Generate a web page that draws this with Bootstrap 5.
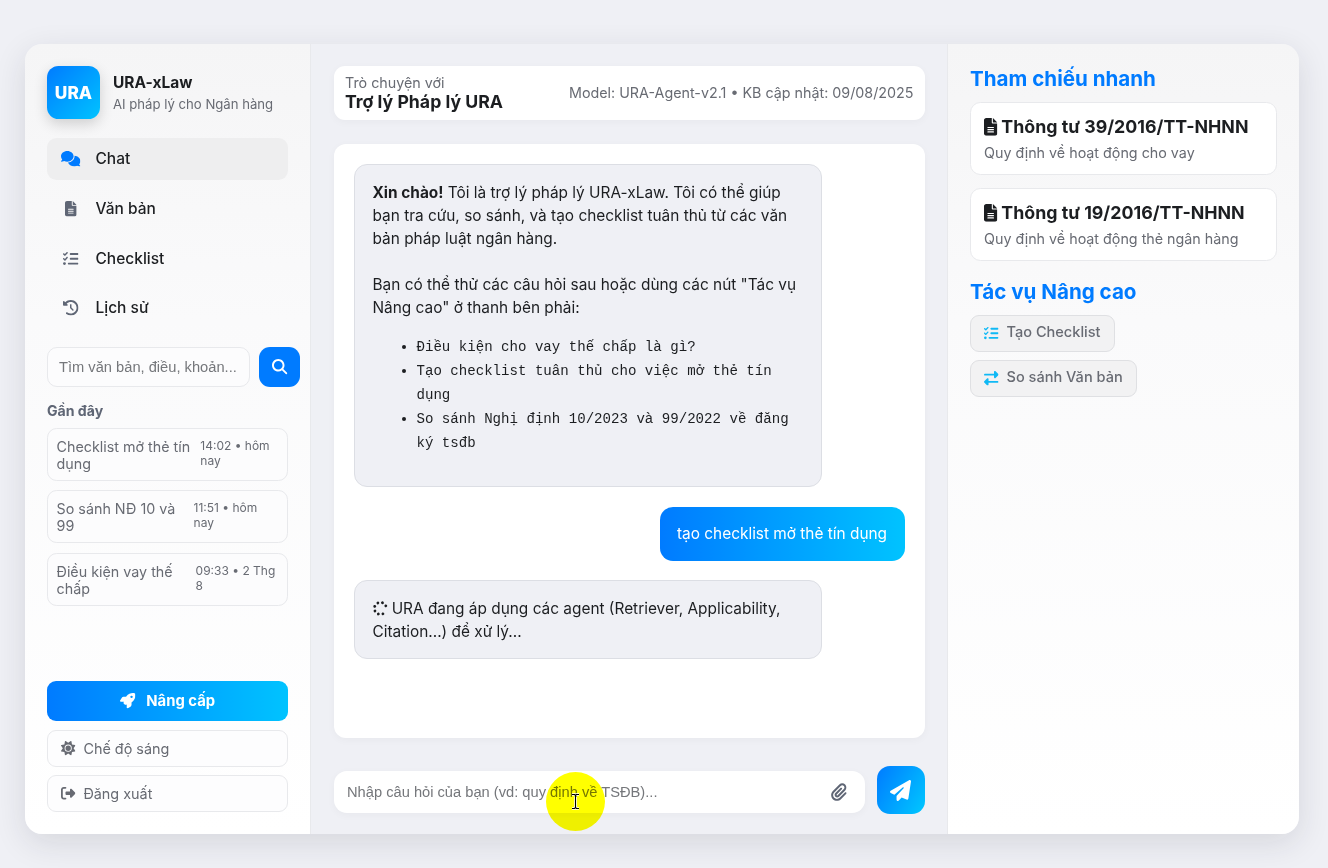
<!DOCTYPE html>
<html lang="vi">
<head>
<meta charset="utf-8">
<meta name="viewport" content="width=device-width, initial-scale=1">
<title>URA-xLaw</title>
<link rel="stylesheet" href="https://cdn.jsdelivr.net/npm/bootstrap@5.3.0/dist/css/bootstrap.min.css">
<style>
:root{--ink:#1c1e21;--muted-ink:#686b73;--brand:#007bff;--grad:linear-gradient(90deg,#007bff,#00c3ff);--line:#e8e9ec}
body{font-family:Inter,"Liberation Sans",sans-serif;font-size:15.4px;line-height:1.5;color:var(--ink);background:#eff0f5;height:868px;overflow:hidden}
svg.ic{fill:currentColor;height:1em;display:inline-block;overflow:visible;flex:none}
.shell{margin:44px 0 0 25px;width:1274px;height:790px;border-radius:17px;background:#eff0f5;box-shadow:0 9px 32px rgba(30,34,50,.12);overflow:hidden}
.side{width:286px;padding:22px;background:linear-gradient(#f5f5f6,#fafafb 35%,#fff);border-right:1px solid var(--line)}
.logo{width:53px;height:53px;border-radius:11.5px;background:linear-gradient(135deg,#007bff,#00c3ff);color:#fff;font-weight:800;font-size:17.3px;box-shadow:0 5px 14px rgba(0,0,0,.16)}
.brand-name{font-size:15.5px;font-weight:700;line-height:23px}
.brand-sub{font-size:13.15px;line-height:20px;color:var(--muted-ink)}
.menu-item{height:42px;margin-bottom:7.7px;padding-left:13px;border-radius:9.6px;font-size:15.5px;font-weight:500;color:var(--ink)}
.menu-item .slot{width:21px;margin-right:14.5px;color:#5f6675}
.menu-item.on{background:#eeeeef}
.menu-item.on .slot{color:var(--brand)}
.find{width:203px;height:40px;border:1px solid var(--line);border-radius:10px;padding:0 11px;background:#fcfcfd;font-family:"Liberation Sans",sans-serif;font-size:14.68px;color:#75777b}
.find-btn{width:41px;height:40px;border-radius:11px;background:var(--brand);color:#fff;font-size:15.4px}
.recent-h{font-size:14.1px;font-weight:700;line-height:20px;color:#5f6675}
.recent{border:1px solid var(--line);border-radius:9.6px;padding:9px 9px 0 8.6px;height:53px;margin-bottom:9.3px;background:#fcfcfd;color:var(--muted-ink);font-size:14.3px;line-height:17px}
.recent .when{font-size:12px;line-height:15px}
.up{height:40px;border-radius:9px;background:var(--grad);color:#fff;font-weight:700;font-size:14.8px}
.ghost{height:37px;border:1px solid var(--line);border-radius:9px;background:#fdfdfe;color:var(--muted-ink);font-size:14.4px;padding-left:13px}
.main-col{width:636px;padding:22px 22.5px 20px 23px}
.head-bar{height:54px;border-radius:11px;background:#fff;padding:0 11px;box-shadow:0 2px 8px rgba(0,0,0,.035)}
.lead-in{font-size:14.3px;line-height:16px;color:var(--muted-ink)}
.title{font-size:17.7px;font-weight:700;line-height:21px}
.model{font-size:14.3px;color:var(--muted-ink)}
.thread{height:594px;margin-top:24px;border-radius:12px;background:#fff;padding:20px;box-shadow:0 2px 8px rgba(0,0,0,.035)}
.bubble{width:468px;border:1px solid #dcdee4;border-radius:13px;background:#eff0f5;padding:16px 17.5px;line-height:23px;margin-bottom:20px}
.tips{font-family:"Liberation Mono",monospace;font-size:14.1px;line-height:24px;padding-left:44px;margin:16px 0 0}
.mine{height:54px;width:245px;border-radius:13px;background:var(--grad);color:#fff;margin-bottom:19px}
.composer{height:48px;margin-top:28px}
.ask{height:42px;width:531px;margin-top:4px;border-radius:13px;background:#fff;padding:0 18px 0 13px;font-family:"Liberation Sans",sans-serif;font-size:14.68px;color:#75777b;box-shadow:0 2px 8px rgba(0,0,0,.035)}
.send{width:48px;height:48px;border-radius:13px;background:linear-gradient(120deg,#007bff,#00c8ff);color:#fff;font-size:21px}
.right-col{width:352px;padding:22px 22px;background:linear-gradient(#f5f5f6,#fafafb 35%,#fff);border-left:1px solid var(--line)}
.sec{font-size:20.6px;font-weight:700;line-height:26px;color:var(--brand);margin:0}
.ref{height:73px;border:1px solid var(--line);border-radius:10.5px;background:#fff;padding:11px 13px;margin-bottom:13px}
.ref-t{font-size:17.8px;font-weight:700;line-height:26px}
.ref-s{font-size:14.3px;line-height:22px;color:var(--muted-ink);margin-top:2px}
.act{height:36.5px;border:1px solid #dfe0e3;border-radius:9px;background:#f2f2f3;padding:0 13px;font-size:14.55px;font-weight:500;color:var(--muted-ink);margin-bottom:8.5px}
.act svg{color:#10b9f5}
.halo{position:absolute;left:546px;top:772px;width:59px;height:59px;border-radius:50%;background:#ff0;mix-blend-mode:multiply}
.caret{position:absolute;left:571px;top:793px}
</style>
</head>
<body class="position-relative">
<svg width="0" height="0" class="position-absolute">
<defs>
<symbol id="chat" viewBox="0 0 640 512"><path d="M208 352c114.900 0 208-78.800 208-176S322.900 0 208 0S0 78.800 0 176c0 38.600 14.700 74.300 39.600 103.400c-3.500 9.400-8.700 17.700-14.200 24.700c-4.800 6.200-9.700 11-13.300 14.300c-1.800 1.600-3.300 2.900-4.300 3.700c-.5 .4-.9 .7-1.100 .8l-.2 .2C1 327.200-1.400 334.400 .8 340.900S9.100 352 16 352c21.800 0 43.800-5.600 62.100-12.500c9.200-3.500 17.800-7.400 25.200-11.400C134.100 343.300 169.800 352 208 352zM448 176c0 112.300-99.100 196.900-216.500 207C255.800 457.400 336.400 512 432 512c38.200 0 73.900-8.700 104.700-23.900c7.500 4 16 7.900 25.200 11.400c18.300 6.900 40.300 12.500 62.100 12.500c6.900 0 13.100-4.500 15.200-11.100c2.100-6.600-.2-13.800-5.800-17.900l-.2-.2c-.2-.2-.6-.4-1.100-.8c-1-.8-2.500-2-4.300-3.700c-3.600-3.300-8.500-8.100-13.300-14.300c-5.500-7-10.700-15.400-14.200-24.700c24.900-29 39.600-64.700 39.600-103.400c0-92.800-84.900-168.900-192.600-175.500c.4 5.100 .6 10.300 .6 15.500z"/></symbol>
<symbol id="file" viewBox="0 0 384 512"><path d="M64 0C28.700 0 0 28.700 0 64V448c0 35.300 28.700 64 64 64H320c35.300 0 64-28.700 64-64V160H256c-17.700 0-32-14.300-32-32V0H64zM256 0V128H384L256 0zM112 256H272c8.800 0 16 7.200 16 16s-7.200 16-16 16H112c-8.800 0-16-7.200-16-16s7.200-16 16-16zm0 64H272c8.800 0 16 7.200 16 16s-7.200 16-16 16H112c-8.800 0-16-7.200-16-16s7.200-16 16-16zm0 64H272c8.800 0 16 7.200 16 16s-7.200 16-16 16H112c-8.800 0-16-7.200-16-16s7.200-16 16-16z"/></symbol>
<symbol id="list" viewBox="0 0 512 512"><path d="M152.100 38.200c9.900 8.900 10.700 24 1.800 33.900l-72 80c-4.400 4.900-10.600 7.800-17.200 7.900s-12.900-2.400-17.600-7L7 113C-2.300 103.600-2.300 88.400 7 79s24.600-9.400 33.900 0l22.100 22.100 55.100-61.200c8.900-9.900 24-10.700 33.900-1.800zm0 160c9.900 8.900 10.700 24 1.800 33.900l-72 80c-4.400 4.900-10.600 7.800-17.200 7.900s-12.900-2.400-17.600-7L7 273c-9.400-9.400-9.400-24.600 0-33.900s24.600-9.400 33.900 0l22.100 22.100 55.100-61.200c8.900-9.900 24-10.700 33.900-1.800zM224 96c0-17.700 14.300-32 32-32H480c17.700 0 32 14.300 32 32s-14.300 32-32 32H256c-17.700 0-32-14.300-32-32zm0 160c0-17.700 14.300-32 32-32H480c17.700 0 32 14.300 32 32s-14.300 32-32 32H256c-17.700 0-32-14.300-32-32zM160 416c0-17.700 14.300-32 32-32H480c17.700 0 32 14.300 32 32s-14.300 32-32 32H192c-17.700 0-32-14.300-32-32zM48 368a48 48 0 1 1 0 96 48 48 0 1 1 0-96z"/></symbol>
<symbol id="hist" viewBox="0 0 512 512"><path d="M75 75L41 41C25.900 25.900 0 36.600 0 57.900V168c0 13.300 10.700 24 24 24H134.100c21.400 0 32.100-25.900 17-41l-30.800-30.800C155 85.500 203 64 256 64c106 0 192 86 192 192s-86 192-192 192c-40.800 0-78.600-12.700-109.700-34.400c-14.500-10.100-34.400-6.600-44.600 7.900s-6.600 34.400 7.900 44.600C151.200 495 201.700 512 256 512c141.400 0 256-114.600 256-256S397.400 0 256 0C185.300 0 121.300 28.700 75 75zm181 53c-13.300 0-24 10.700-24 24V256c0 6.400 2.500 12.500 7 17l72 72c9.400 9.400 24.600 9.400 33.900 0s9.400-24.600 0-33.900l-65-65V152c0-13.300-10.700-24-24-24z"/></symbol>
<symbol id="glass" viewBox="0 0 512 512"><path d="M416 208c0 45.900-14.900 88.300-40 122.700L502.600 457.400c12.500 12.500 12.500 32.800 0 45.300s-32.800 12.500-45.300 0L330.700 376c-34.400 25.200-76.800 40-122.700 40C93.100 416 0 322.900 0 208S93.100 0 208 0S416 93.100 416 208zM208 352a144 144 0 1 0 0-288 144 144 0 1 0 0 288z"/></symbol>
<symbol id="rocket" viewBox="0 0 512 512"><path d="M156.600 384.900L125.700 354c-8.500-8.500-11.500-20.800-7.700-32.200c3-8.900 7-20.500 11.800-33.800L24 288c-8.600 0-16.600-4.600-20.900-12.100s-4.200-16.700 .2-24.100l52.500-88.500c13-21.900 36.500-35.300 61.900-35.300l82.300 0c2.400-4 4.800-7.700 7.200-11.300C289.100-4.100 411.100-8.100 483.900 5.300c11.600 2.100 20.600 11.200 22.800 22.800c13.400 72.900 9.300 194.800-111.400 276.700c-3.500 2.400-7.300 4.800-11.300 7.200v82.300c0 25.400-13.400 49-35.300 61.900l-88.500 52.500c-7.400 4.400-16.600 4.500-24.100 .2s-12.100-12.200-12.100-20.900V380.800c-14.100 4.900-26.400 8.900-35.700 11.900c-11.200 3.600-23.400 .5-31.800-7.800zM384 168a40 40 0 1 0 0-80 40 40 0 1 0 0 80z"/></symbol>
<symbol id="sun" viewBox="0 0 512 512"><path d="M361.500 1.200c5 2.100 8.600 6.600 9.600 11.900L391 121l107.900 19.800c5.300 1 9.800 4.600 11.900 9.600s1.500 10.700-1.600 15.200L446.900 256l62.300 90.300c3.100 4.500 3.700 10.200 1.600 15.200s-6.600 8.600-11.900 9.600L391 391 371.100 498.900c-1 5.300-4.600 9.800-9.600 11.900s-10.700 1.500-15.200-1.600L256 446.900l-90.300 62.300c-4.500 3.100-10.200 3.700-15.200 1.600s-8.600-6.600-9.600-11.900L121 391 13.100 371.100c-5.300-1-9.800-4.600-11.900-9.600s-1.500-10.700 1.600-15.200L65.100 256 2.800 165.700c-3.100-4.500-3.700-10.200-1.600-15.200s6.600-8.600 11.900-9.600L121 121 140.900 13.100c1-5.300 4.600-9.800 9.600-11.900s10.700-1.500 15.200 1.600L256 65.100 346.300 2.800c4.500-3.100 10.200-3.700 15.200-1.600zM160 256a96 96 0 1 1 192 0 96 96 0 1 1 -192 0zm224 0a128 128 0 1 0 -256 0 128 128 0 1 0 256 0z"/></symbol>
<symbol id="exit" viewBox="0 0 512 512"><path d="M377.900 105.900L500.700 228.700c7.200 7.200 11.300 17.100 11.300 27.300s-4.100 20.100-11.300 27.300L377.900 406.100c-6.400 6.400-15 9.900-24 9.900c-18.700 0-33.900-15.200-33.900-33.900l0-62.100-128 0c-17.700 0-32-14.300-32-32l0-64c0-17.700 14.300-32 32-32l128 0 0-62.100c0-18.700 15.200-33.900 33.900-33.900c9 0 17.600 3.600 24 9.900zM160 96L96 96c-17.700 0-32 14.300-32 32l0 256c0 17.700 14.300 32 32 32l64 0c17.700 0 32 14.300 32 32s-14.300 32-32 32l-64 0c-53 0-96-43-96-96L0 128C0 75 43 32 96 32l64 0c17.700 0 32 14.300 32 32s-14.300 32-32 32z"/></symbol>
<symbol id="spin" viewBox="0 0 512 512"><g transform="rotate(65 256 256)"><circle cx="256" cy="48" r="48"/><circle cx="256" cy="464" r="48"/><circle cx="48" cy="256" r="48"/><circle cx="464" cy="256" r="48"/><circle cx="109" cy="109" r="48"/><circle cx="109" cy="403" r="48"/><circle cx="403" cy="403" r="48"/></g></symbol>
<symbol id="clip" viewBox="0 0 448 512"><path d="M364.200 83.800c-24.400-24.400-64-24.400-88.400 0l-184 184c-42.100 42.100-42.100 110.300 0 152.400s110.300 42.100 152.400 0l152-152c10.900-10.900 28.700-10.900 39.600 0s10.900 28.700 0 39.600l-152 152c-64 64-167.600 64-231.600 0s-64-167.600 0-231.600l184-184c46.300-46.300 121.300-46.300 167.600 0s46.300 121.300 0 167.600l-176 176c-28.600 28.600-75 28.600-103.600 0s-28.600-75 0-103.600l144-144c10.900-10.900 28.700-10.900 39.600 0s10.900 28.700 0 39.600l-144 144c-6.700 6.700-6.700 17.700 0 24.400s17.700 6.700 24.400 0l176-176c24.400-24.400 24.400-64 0-88.400z"/></symbol>
<symbol id="plane" viewBox="0 0 512 512"><path d="M498.100 5.600c10.100 7 15.400 19.100 13.500 31.200l-64 416c-1.500 9.700-7.400 18.200-16 23s-18.900 5.400-28 1.600L284 427.700l-68.500 74.100c-8.900 9.700-22.900 12.900-35.200 8.100S160 493.200 160 480V396.400c0-4 1.500-7.800 4.200-10.700L331.800 202.800c5.800-6.300 5.600-16-.4-22s-15.700-6.400-22-.7L106 360.800 17.700 316.600C7.100 311.300 .3 300.700 0 288.900s5.900-22.800 16.100-28.700l448-256c10.700-6.100 23.900-5.500 34 1.400z"/></symbol>
<symbol id="swap" viewBox="0 0 512 512"><path d="M32 96l320 0 0-64c0-12.900 7.800-24.600 19.800-29.600s25.700-2.200 34.900 6.900l96 96c6 6 9.400 14.100 9.400 22.600s-3.400 16.600-9.400 22.600l-96 96c-9.200 9.200-22.900 11.900-34.900 6.900s-19.800-16.600-19.800-29.600l0-64L32 160c-17.700 0-32-14.300-32-32s14.300-32 32-32zM480 352c17.700 0 32 14.300 32 32s-14.300 32-32 32l-320 0 0 64c0 12.900-7.800 24.600-19.800 29.600s-25.700 2.200-34.900-6.900l-96-96c-6-6-9.400-14.100-9.400-22.600s3.400-16.600 9.400-22.600l96-96c9.200-9.200 22.900-11.900 34.900-6.900s19.800 16.600 19.800 29.600l0 64 320 0z"/></symbol>
</defs>
</svg>

<div class="shell d-flex">
  <aside class="side d-flex flex-column flex-shrink-0">
    <div class="d-flex align-items-center mb-3" style="height:56px;padding-bottom:3px">
      <div class="logo d-flex align-items-center justify-content-center flex-shrink-0">URA</div>
      <div style="margin-left:13px">
        <div class="brand-name">URA-xLaw</div>
        <div class="brand-sub text-nowrap">AI pháp lý cho Ngân hàng</div>
      </div>
    </div>
    <nav>
      <div class="menu-item on d-flex align-items-center"><span class="slot d-flex justify-content-center"><svg class="ic" viewBox="0 0 640 512"><use href="#chat"/></svg></span>Chat</div>
      <div class="menu-item d-flex align-items-center"><span class="slot d-flex justify-content-center"><svg class="ic" viewBox="0 0 384 512"><use href="#file"/></svg></span>Văn bản</div>
      <div class="menu-item d-flex align-items-center"><span class="slot d-flex justify-content-center"><svg class="ic" viewBox="0 0 512 512"><use href="#list"/></svg></span>Checklist</div>
      <div class="menu-item d-flex align-items-center"><span class="slot d-flex justify-content-center"><svg class="ic" viewBox="0 0 512 512"><use href="#hist"/></svg></span>Lịch sử</div>
    </nav>
    <div class="d-flex mt-2" style="padding-top:2.400px;column-gap:9px">
      <div class="find d-flex align-items-center flex-shrink-0 text-nowrap">Tìm văn bản, điều, khoản...</div>
      <div class="find-btn d-flex align-items-center justify-content-center flex-shrink-0"><svg class="ic" viewBox="0 0 512 512"><use href="#glass"/></svg></div>
    </div>
    <div class="recent-h" style="margin:14px 0 7px">Gần đây</div>
    <div class="recent d-flex"><span style="width:144.400px">Checklist mở thẻ tín dụng</span><span class="when" style="width:78px">14:02 • hôm nay</span></div>
    <div class="recent d-flex"><span style="width:137px">So sánh NĐ 10 và 99</span><span class="when" style="width:78px">11:51 • hôm nay</span></div>
    <div class="recent d-flex"><span style="width:140px">Điều kiện vay thế chấp</span><span class="when" style="width:83px">09:33 • 2 Thg 8</span></div>
    <div class="mt-auto">
      <div class="up d-flex align-items-center justify-content-center"><svg class="ic" viewBox="0 0 512 512" style="font-size:15.400px;margin-right:11px"><use href="#rocket"/></svg>Nâng cấp</div>
      <div class="ghost d-flex align-items-center" style="margin-top:9px"><svg class="ic me-2" viewBox="0 0 512 512"><use href="#sun"/></svg>Chế độ sáng</div>
      <div class="ghost d-flex align-items-center" style="margin-top:8px"><svg class="ic me-2" viewBox="0 0 512 512"><use href="#exit"/></svg>Đăng xuất</div>
    </div>
  </aside>

  <main class="main-col flex-shrink-0">
    <header class="head-bar d-flex align-items-center justify-content-between">
      <div><div class="lead-in">Trò chuyện với</div><div class="title">Trợ lý Pháp lý URA</div></div>
      <div class="model text-nowrap">Model: URA-Agent-v2.1 • KB cập nhật: 09/08/2025</div>
    </header>
    <section class="thread">
      <div class="bubble" style="height:323px"><strong>Xin chào!</strong> Tôi là trợ lý pháp lý URA-xLaw. Tôi có thể giúp bạn tra cứu, so sánh, và tạo checklist tuân thủ từ các văn bản pháp luật ngân hàng.<br><br>Bạn có thể thử các câu hỏi sau hoặc dùng các nút "Tác vụ Nâng cao" ở thanh bên phải:
        <ul class="tips"><li>Điều kiện cho vay thế chấp là gì?</li><li>Tạo checklist tuân thủ cho việc mở thẻ tín dụng</li><li>So sánh Nghị định 10/2023 và 99/2022 về đăng ký tsđb</li></ul>
      </div>
      <div class="mine d-flex align-items-center justify-content-center ms-auto text-nowrap">tạo checklist mở thẻ tín dụng</div>
      <div class="bubble mb-0" style="height:79px"><svg class="ic" viewBox="0 0 512 512" style="font-size:14.800px;vertical-align:-2px"><use href="#spin"/></svg> URA đang áp dụng các agent (Retriever, Applicability, Citation...) để xử lý...</div>
    </section>
    <div class="composer d-flex align-items-center justify-content-between">
      <div class="ask d-flex align-items-center justify-content-between"><span>Nhập câu hỏi của bạn (vd: quy định về TSĐB)...</span><svg class="ic" viewBox="0 0 448 512" style="font-size:18px;color:#5f6675"><use href="#clip"/></svg></div>
      <div class="send d-flex align-items-center justify-content-center"><svg class="ic" viewBox="0 0 512 512"><use href="#plane"/></svg></div>
    </div>
  </main>

  <aside class="right-col flex-shrink-0">
    <h2 class="sec" style="margin-bottom:10px">Tham chiếu nhanh</h2>
    <div class="ref"><div class="ref-t d-flex align-items-center text-nowrap"><svg class="ic" viewBox="0 0 384 512" style="margin-right:4px"><use href="#file"/></svg>Thông tư 39/2016/TT-NHNN</div><div class="ref-s">Quy định về hoạt động cho vay</div></div>
    <div class="ref"><div class="ref-t d-flex align-items-center text-nowrap"><svg class="ic" viewBox="0 0 384 512" style="margin-right:4px"><use href="#file"/></svg>Thông tư 19/2016/TT-NHNN</div><div class="ref-s">Quy định về hoạt động thẻ ngân hàng</div></div>
    <h2 class="sec" style="margin:18px 0 10px">Tác vụ Nâng cao</h2>
    <div class="d-flex flex-column align-items-start">
      <div class="act d-flex align-items-center"><svg class="ic me-2" viewBox="0 0 512 512"><use href="#list"/></svg>Tạo Checklist</div>
      <div class="act d-flex align-items-center"><svg class="ic me-2" viewBox="0 0 512 512"><use href="#swap"/></svg>So sánh Văn bản</div>
    </div>
  </aside>
</div>
<div class="halo"></div>
<svg class="caret" width="9" height="17" viewBox="0 0 9 17" fill="none"><path d="M1 1.500h2.500l1 1 1-1H8M4.500 2v13M1 15.500h2.500l1-1 1 1H8" stroke="#fff" stroke-width="2.600"/><path d="M1 1.500h2.500l1 1 1-1H8M4.500 2v13M1 15.500h2.500l1-1 1 1H8" stroke="#000" stroke-width="1.100"/></svg>
<script src="https://cdn.jsdelivr.net/npm/bootstrap@5.3.0/dist/js/bootstrap.bundle.min.js"></script>
</body>
</html>
